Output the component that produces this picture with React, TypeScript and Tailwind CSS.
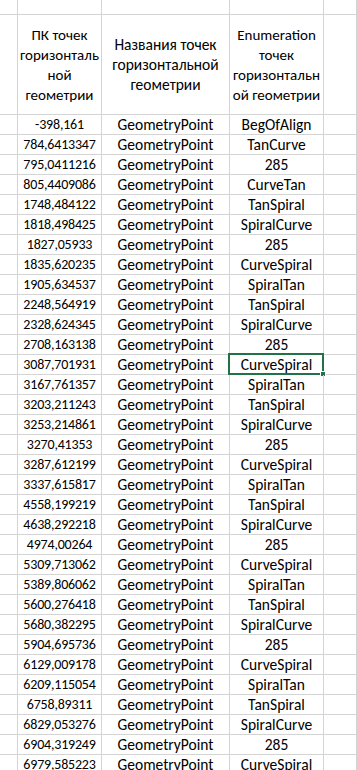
import React from "react";

const rows: [string, string][] = [
  ["-398,161", "BegOfAlign"],
  ["784,6413347", "TanCurve"],
  ["795,0411216", "285"],
  ["805,4409086", "CurveTan"],
  ["1748,484122", "TanSpiral"],
  ["1818,498425", "SpiralCurve"],
  ["1827,05933", "285"],
  ["1835,620235", "CurveSpiral"],
  ["1905,634537", "SpiralTan"],
  ["2248,564919", "TanSpiral"],
  ["2328,624345", "SpiralCurve"],
  ["2708,163138", "285"],
  ["3087,701931", "CurveSpiral"],
  ["3167,761357", "SpiralTan"],
  ["3203,211243", "TanSpiral"],
  ["3253,214861", "SpiralCurve"],
  ["3270,41353", "285"],
  ["3287,612199", "CurveSpiral"],
  ["3337,615817", "SpiralTan"],
  ["4558,199219", "TanSpiral"],
  ["4638,292218", "SpiralCurve"],
  ["4974,00264", "285"],
  ["5309,713062", "CurveSpiral"],
  ["5389,806062", "SpiralTan"],
  ["5600,276418", "TanSpiral"],
  ["5680,382295", "SpiralCurve"],
  ["5904,695736", "285"],
  ["6129,009178", "CurveSpiral"],
  ["6209,115054", "SpiralTan"],
  ["6758,89311", "TanSpiral"],
  ["6829,053276", "SpiralCurve"],
  ["6904,319249", "285"],
  ["6979,585223", "CurveSpiral"],
];

const cell = "border-r border-b border-[#d4d4d4] flex items-center justify-center text-center";

export default function App() {
  return (
    <div
      className="w-[357px] h-[770px] overflow-hidden bg-white text-black text-[15.5px] leading-[20px]"
      style={{ fontFamily: "Carlito, Lato, 'Liberation Sans', sans-serif" }}
    >
      <div className="grid grid-cols-[18px_84px_128px_94px_1fr]">
        {/* top cut-off row */}
        <div className={`${cell} h-[15px]`} />
        <div className={`${cell} h-[15px]`} />
        <div className={`${cell} h-[15px]`} />
        <div className={`${cell} h-[15px]`} />
        <div className={`${cell} h-[15px]`} />
        {/* header */}
        <div className={`${cell} h-[100px]`} />
        <div className={`${cell} h-[100px] whitespace-nowrap text-[15px]`}>
          <span>
            ПК точек
            <br />
            горизонталь
            <br />
            ной
            <br />
            геометрии
          </span>
        </div>
        <div className={`${cell} h-[100px] whitespace-nowrap`}>
          <span>
            Названия точек
            <br />
            горизонтальной
            <br />
            геометрии
          </span>
        </div>
        <div className={`${cell} h-[100px] whitespace-nowrap text-[15px]`}>
          <span>
            Enumeration
            <br />
            точек
            <br />
            горизонтальн
            <br />
            ой геометрии
          </span>
        </div>
        <div className={`${cell} h-[100px]`} />
        {rows.map(([pk, en], i) => (
          <React.Fragment key={i}>
            <div className={`${cell} h-5`} />
            <div className={`${cell} h-5 whitespace-nowrap text-[14px] tracking-[-0.2px]`}>{pk}</div>
            <div className={`${cell} h-5 whitespace-nowrap`}>GeometryPoint</div>
            <div className={`${cell} h-5 whitespace-nowrap relative`}>
              {en}
              {i === 12 && (
                <div className="absolute left-[-2px] top-[-2px] right-[-1px] bottom-[-1px] border-2 border-[#217346]">
                  <div className="absolute right-[-4px] bottom-[-4px] w-[6px] h-[6px] bg-[#217346] border border-white" />
                </div>
              )}
            </div>
            <div className={`${cell} h-5`} />
          </React.Fragment>
        ))}
      </div>
    </div>
  );
}
